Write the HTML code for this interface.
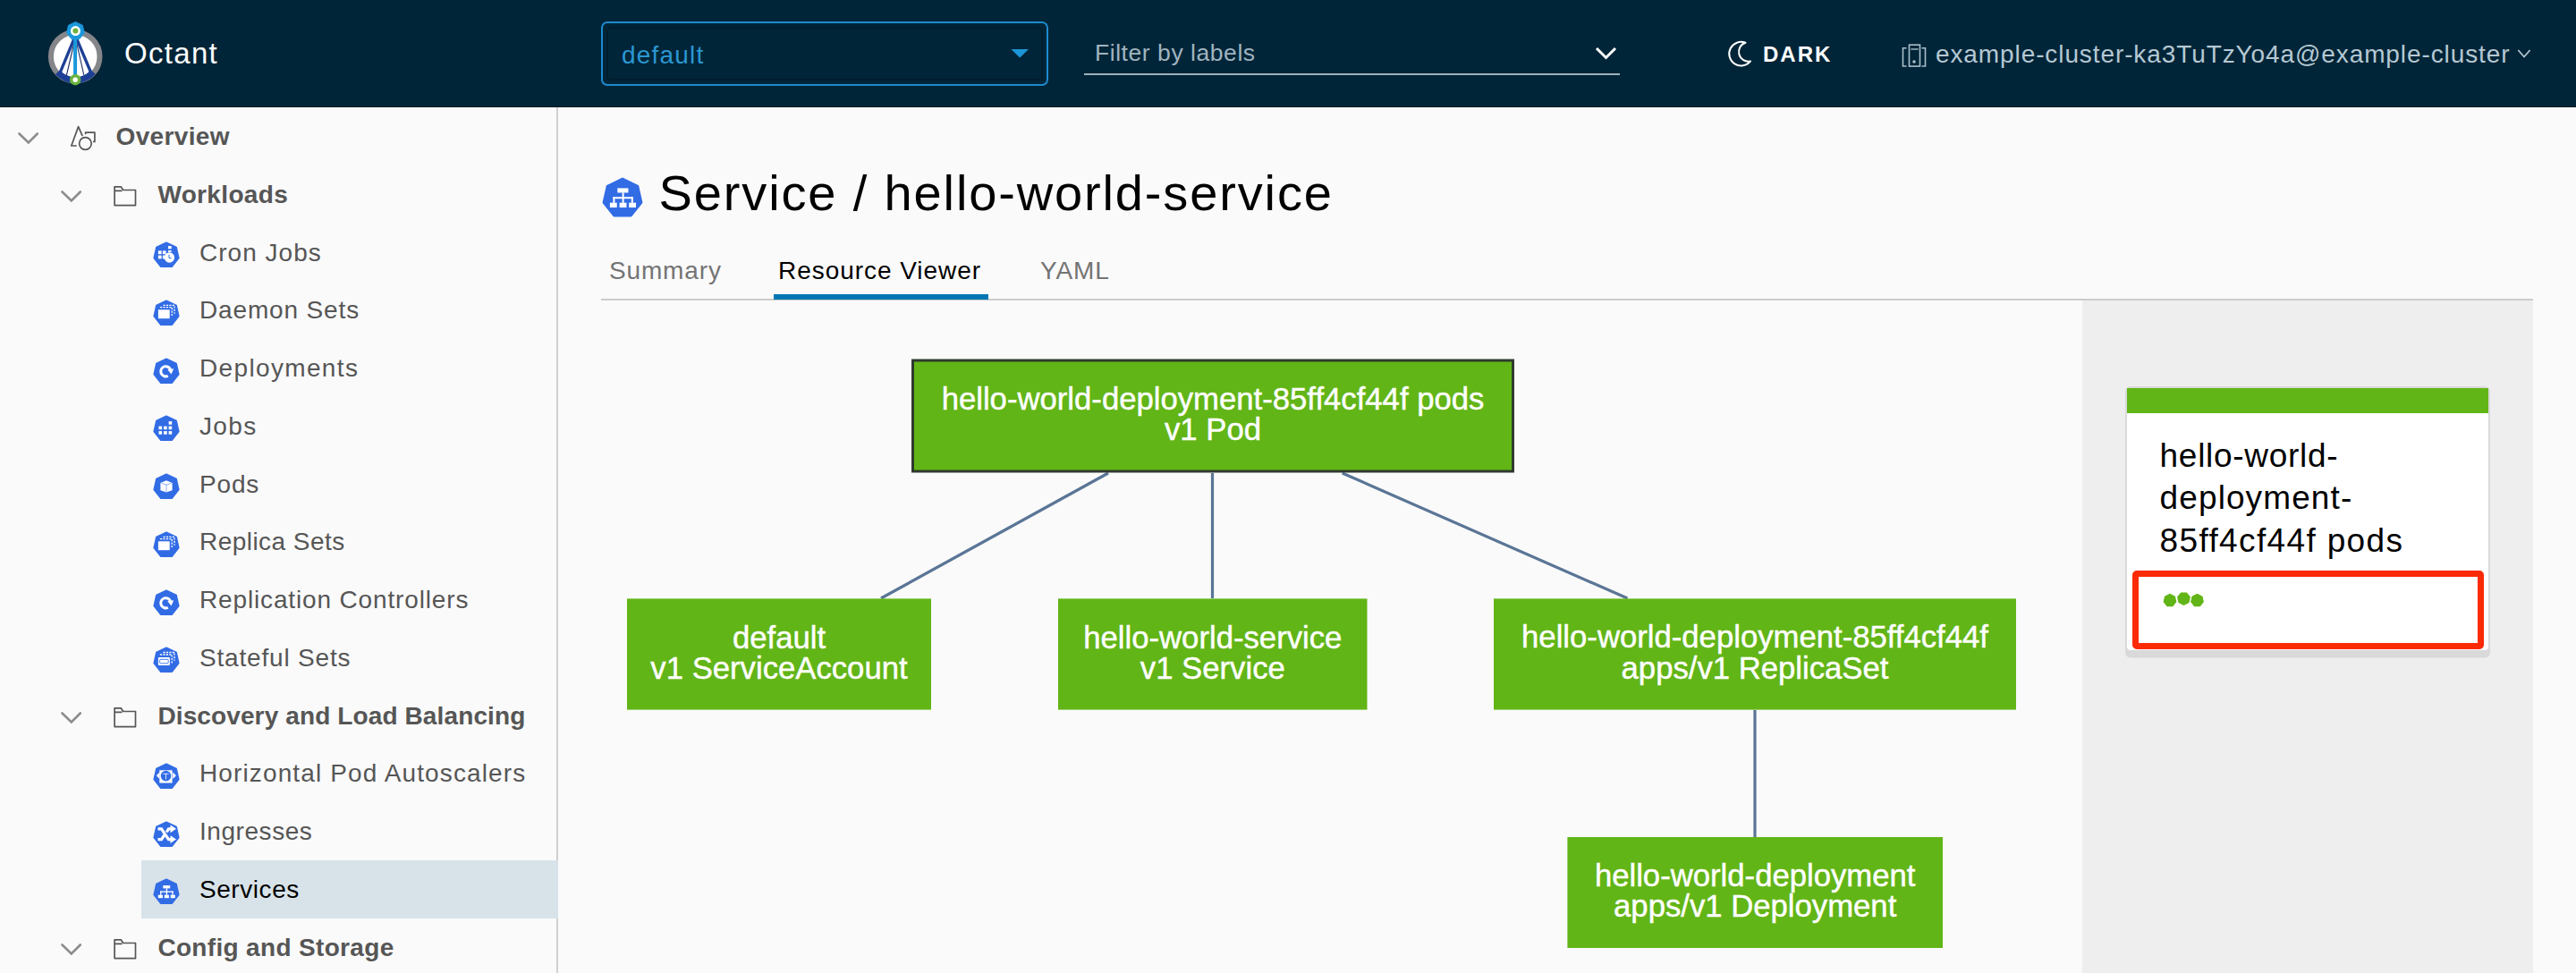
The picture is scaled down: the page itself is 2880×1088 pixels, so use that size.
<!DOCTYPE html><html><head><meta charset="utf-8"><title>Octant</title><style>
*{margin:0;padding:0;box-sizing:border-box}
html,body{width:2880px;height:1088px;overflow:hidden;background:#fafafa;font-family:"Liberation Sans",sans-serif}
.a{position:absolute;display:block}
.t{position:absolute;white-space:nowrap}
</style></head><body>
<div class="a" style="left:0;top:0;width:2880px;height:120px;background:#002538;border-bottom:1px solid #001a28"></div>
<svg class="a" style="left:40px;top:15px" width="90" height="90" viewBox="0 0 90 90">
<circle cx="44.2" cy="48.3" r="27.3" fill="#fff" stroke="#85868a" stroke-width="6"/>
<path d="M24.5 65.8 A26.3 26.3 0 0 0 64.1 65.5" stroke="#1d3f95" stroke-width="7" fill="none"/>
<path d="M44.3 25 L27.3 65.8 M44.3 25 L61.2 65" stroke="#1d3f95" stroke-width="3.3" fill="none"/>
<path d="M44.3 27 L34.3 69.5 M44.3 27 L53.8 68.8" stroke="#1f2f60" stroke-width="1.1" fill="none"/>
<path d="M44.1 25 V70" stroke="#1a98dc" stroke-width="4" fill="none"/>
<polygon points="44.40,9.40 52.37,13.24 54.34,21.87 48.83,28.79 39.97,28.79 34.46,21.87 36.43,13.24" fill="#1a98dc" stroke="#1a98dc" stroke-width="0.8" stroke-linejoin="round"/>
<circle cx="44.4" cy="19.6" r="5.5" fill="#fff"/><circle cx="44.4" cy="19.6" r="3" fill="#6cb33e"/>
<circle cx="44.2" cy="74.2" r="6.2" fill="#6cb33e"/><circle cx="44.2" cy="74.2" r="2.7" fill="#fff"/>
</svg>
<div class="t" style="left:139.00px;top:43.07px;font-size:33px;line-height:33px;color:#fff;font-weight:normal;letter-spacing:1.3px;">Octant</div>
<div class="a" style="left:672px;top:24px;width:500px;height:72px;border:2px solid #1d8ace;border-radius:7px"></div>
<div class="a" style="left:678px;top:30px;width:488px;height:60px;border:2px solid rgba(0,10,20,0.22);border-radius:5px"></div>
<div class="t" style="left:695.00px;top:47.50px;font-size:28px;line-height:28px;color:#2b97d2;font-weight:normal;letter-spacing:1.2px;">default</div>
<svg class="a" style="left:1128px;top:52px" width="24" height="16"><polygon points="2.5,3 22,3 12.2,12.5" fill="#1b96d9"/></svg>
<div class="t" style="left:1224.00px;top:45.77px;font-size:26.5px;line-height:26.5px;color:#a0b4c0;font-weight:normal;letter-spacing:0.55px;">Filter by labels</div>
<div class="a" style="left:1212px;top:82px;width:599px;height:2px;background:#9db1bd"></div>
<svg class="a" style="left:1780px;top:48px" width="32" height="22"><path d="M5 6 L15.5 16.5 L26 6" stroke="#fff" stroke-width="3" fill="none"/></svg>
<svg class="a" style="left:1920px;top:35px" width="44" height="50" viewBox="0 0 44 50"><path d="M31.5 12.8 A13.3 13.3 0 1 0 37 33.4 A10.67 10.67 0 0 1 31.5 12.8 Z" stroke="#fff" stroke-width="2" fill="none" stroke-linejoin="round"/></svg>
<div class="t" style="left:1971.00px;top:49.48px;font-size:24px;line-height:24px;color:#fff;font-weight:bold;letter-spacing:2.0px;">DARK</div>
<svg class="a" style="left:2122px;top:45px" width="36" height="34" viewBox="0 0 36 34">
<path d="M9.5 8.7 H5.5 V29 H9.5 M26.5 8.7 H30.5 V29 H26.5" stroke="#a9bfcb" stroke-width="1.6" fill="none"/>
<rect x="12.5" y="5.2" width="12" height="23.9" stroke="#a9bfcb" stroke-width="1.6" fill="none"/>
<path d="M14.3 10 H22.7" stroke="#a9bfcb" stroke-width="1.4"/><circle cx="18" cy="24" r="1.8" fill="#a9bfcb"/></svg>
<div class="t" style="left:2164.00px;top:46.70px;font-size:28px;line-height:28px;color:#b5c8d3;font-weight:normal;letter-spacing:0.9px;">example-cluster-ka3TuTzYo4a@example-cluster</div>
<svg class="a" style="left:2810px;top:50px" width="24" height="20"><path d="M5.3 6 L12 13.5 L18.6 6" stroke="#b5c8d3" stroke-width="1.7" fill="none"/></svg>
<div class="a" style="left:622px;top:120px;width:2px;height:968px;background:#cfcfcf"></div>
<div class="a" style="left:158px;top:962.0px;width:466px;height:65px;background:#d8e3e9"></div>
<svg class="a" style="left:17px;top:140.0px" width="30" height="28"><path d="M4.5 9.5 L14.8 19.5 L24.8 9.5" stroke="#8c8c8c" stroke-width="2.6" fill="none" stroke-linecap="round"/></svg>
<svg class="a" style="left:74px;top:136px" width="38" height="36" viewBox="0 0 38 36">
<path d="M11.1 27 H5.8 L13.6 5.6 L17.9 15.4" stroke="#565656" stroke-width="1.7" fill="none" stroke-linejoin="round" stroke-linecap="round"/>
<path d="M21.6 13.4 V12.2 H31.9 V22.4 H30.8" stroke="#565656" stroke-width="1.7" fill="none" stroke-linejoin="round" stroke-linecap="round"/>
<circle cx="21.4" cy="24.5" r="6.8" stroke="#565656" stroke-width="1.7" fill="none"/></svg>
<div class="t" style="left:129.50px;top:139.20px;font-size:28px;line-height:28px;color:#565656;font-weight:bold;letter-spacing:0.35px;">Overview</div>
<svg class="a" style="left:64.5px;top:204.8px" width="30" height="28"><path d="M4.5 9.5 L14.8 19.5 L24.8 9.5" stroke="#8c8c8c" stroke-width="2.6" fill="none" stroke-linecap="round"/></svg>
<svg class="a" style="left:124.3px;top:204.0px" width="30" height="30"><path d="M4.1 4.8 H11.2 L13.7 8.5 H27.5 V25.6 H4.1 Z M4.1 9.4 H12.5" stroke="#565656" stroke-width="1.7" fill="none" stroke-linejoin="round"/></svg>
<div class="t" style="left:176.40px;top:203.95px;font-size:28px;line-height:28px;color:#565656;font-weight:bold;letter-spacing:0.35px;">Workloads</div>
<svg class="a" style="left:171px;top:270.1px" width="30" height="30" viewBox="0 0 30 30"><polygon points="15.00,1.20 26.10,6.55 28.84,18.56 21.16,28.19 8.84,28.19 1.16,18.56 3.90,6.55" fill="#326ce5" stroke="#326ce5" stroke-width="1.6" stroke-linejoin="round"/><g fill="#fff"><rect x="5.9" y="10.4" width="3.7" height="3.8"/><rect x="10.9" y="10.4" width="3.7" height="3.8"/><rect x="5.9" y="15.6" width="3.7" height="3.8"/><rect x="10.9" y="15.6" width="3" height="3.8"/><rect x="17" y="5.1" width="3.7" height="3.2"/><rect x="17" y="10" width="3.7" height="1.8"/><circle cx="18.4" cy="18" r="5.7"/></g><path d="M18 14.8 V18.6 H20.6" stroke="#326ce5" stroke-width="1" fill="none"/></svg>
<div class="t" style="left:223.00px;top:268.70px;font-size:28px;line-height:28px;color:#565656;font-weight:normal;letter-spacing:1.02px;">Cron Jobs</div>
<svg class="a" style="left:171px;top:334.9px" width="30" height="30" viewBox="0 0 30 30"><polygon points="15.00,1.20 26.10,6.55 28.84,18.56 21.16,28.19 8.84,28.19 1.16,18.56 3.90,6.55" fill="#326ce5" stroke="#326ce5" stroke-width="1.6" stroke-linejoin="round"/><rect x="5.9" y="11.3" width="12.8" height="9.9" fill="#fff"/><path d="M8.5 9 V8.6 H21.2 V18.5" stroke="#fff" stroke-width="1.3" fill="none" stroke-dasharray="2.2 1.2"/><path d="M11.5 6.3 H24 V15.7" stroke="#fff" stroke-width="1.3" fill="none" stroke-dasharray="2.2 1.2"/></svg>
<div class="t" style="left:223.00px;top:333.45px;font-size:28px;line-height:28px;color:#565656;font-weight:normal;letter-spacing:0.85px;">Daemon Sets</div>
<svg class="a" style="left:171px;top:399.6px" width="30" height="30" viewBox="0 0 30 30"><polygon points="15.00,1.20 26.10,6.55 28.84,18.56 21.16,28.19 8.84,28.19 1.16,18.56 3.90,6.55" fill="#326ce5" stroke="#326ce5" stroke-width="1.6" stroke-linejoin="round"/><path d="M16.8 20.3 A5.6 5.6 0 1 1 19.8 14" stroke="#fff" stroke-width="3" fill="none"/><polygon points="16.3,13.2 23.2,12.3 20.5,18.5" fill="#fff"/></svg>
<div class="t" style="left:223.00px;top:398.20px;font-size:28px;line-height:28px;color:#565656;font-weight:normal;letter-spacing:1.35px;">Deployments</div>
<svg class="a" style="left:171px;top:464.4px" width="30" height="30" viewBox="0 0 30 30"><polygon points="15.00,1.20 26.10,6.55 28.84,18.56 21.16,28.19 8.84,28.19 1.16,18.56 3.90,6.55" fill="#326ce5" stroke="#326ce5" stroke-width="1.6" stroke-linejoin="round"/><rect x="17.6" y="7.1" width="3.6" height="3.6" fill="#fff"/><rect x="6.5" y="12.6" width="3.6" height="3.6" fill="#fff"/><rect x="12.1" y="12.6" width="3.6" height="3.6" fill="#fff"/><rect x="17.6" y="12.6" width="3.6" height="3.6" fill="#fff"/><rect x="6.5" y="18.1" width="3.6" height="3.6" fill="#fff"/><rect x="12.1" y="18.1" width="3.6" height="3.6" fill="#fff"/><rect x="17.6" y="18.1" width="3.6" height="3.6" fill="#fff"/></svg>
<div class="t" style="left:223.00px;top:462.95px;font-size:28px;line-height:28px;color:#565656;font-weight:normal;letter-spacing:1.35px;">Jobs</div>
<svg class="a" style="left:171px;top:529.1px" width="30" height="30" viewBox="0 0 30 30"><polygon points="15.00,1.20 26.10,6.55 28.84,18.56 21.16,28.19 8.84,28.19 1.16,18.56 3.90,6.55" fill="#326ce5" stroke="#326ce5" stroke-width="1.6" stroke-linejoin="round"/><polygon points="15,8.3 21.6,11 21.6,19.3 15,21.5 8.4,19.3 8.4,11" fill="#fff"/><path d="M9.5 11.3 L15 13.1 L20.5 11.3 M15 13.1 V21" stroke="#326ce5" stroke-width="0.9" fill="none" opacity="0.6"/></svg>
<div class="t" style="left:223.00px;top:527.70px;font-size:28px;line-height:28px;color:#565656;font-weight:normal;letter-spacing:0.85px;">Pods</div>
<svg class="a" style="left:171px;top:593.8px" width="30" height="30" viewBox="0 0 30 30"><polygon points="15.00,1.20 26.10,6.55 28.84,18.56 21.16,28.19 8.84,28.19 1.16,18.56 3.90,6.55" fill="#326ce5" stroke="#326ce5" stroke-width="1.6" stroke-linejoin="round"/><rect x="5.9" y="11.3" width="12.8" height="9.9" fill="#fff"/><path d="M8.5 9 V8.6 H21.2 V18.5" stroke="#fff" stroke-width="1.3" fill="none" stroke-dasharray="2.2 1.2"/><path d="M11.5 6.3 H24 V15.7" stroke="#fff" stroke-width="1.3" fill="none" stroke-dasharray="2.2 1.2"/></svg>
<div class="t" style="left:223.00px;top:592.45px;font-size:28px;line-height:28px;color:#565656;font-weight:normal;letter-spacing:0.45px;">Replica Sets</div>
<svg class="a" style="left:171px;top:658.6px" width="30" height="30" viewBox="0 0 30 30"><polygon points="15.00,1.20 26.10,6.55 28.84,18.56 21.16,28.19 8.84,28.19 1.16,18.56 3.90,6.55" fill="#326ce5" stroke="#326ce5" stroke-width="1.6" stroke-linejoin="round"/><path d="M16.8 20.3 A5.6 5.6 0 1 1 19.8 14" stroke="#fff" stroke-width="3" fill="none"/><polygon points="16.3,13.2 23.2,12.3 20.5,18.5" fill="#fff"/></svg>
<div class="t" style="left:223.00px;top:657.20px;font-size:28px;line-height:28px;color:#565656;font-weight:normal;letter-spacing:0.85px;">Replication Controllers</div>
<svg class="a" style="left:171px;top:723.3px" width="30" height="30" viewBox="0 0 30 30"><polygon points="15.00,1.20 26.10,6.55 28.84,18.56 21.16,28.19 8.84,28.19 1.16,18.56 3.90,6.55" fill="#326ce5" stroke="#326ce5" stroke-width="1.6" stroke-linejoin="round"/><rect x="5.9" y="12" width="13" height="9" fill="#fff" rx="1"/><rect x="7.6" y="14.3" width="9.6" height="4.5" rx="1.2" fill="none" stroke="#326ce5" stroke-width="0.9"/><path d="M8.5 9.5 V9 H21.2 V18.5" stroke="#fff" stroke-width="1.3" fill="none" stroke-dasharray="2.2 1.2"/><path d="M11.5 6.5 H24 V15.7" stroke="#fff" stroke-width="1.3" fill="none" stroke-dasharray="2.2 1.2"/></svg>
<div class="t" style="left:223.00px;top:721.95px;font-size:28px;line-height:28px;color:#565656;font-weight:normal;letter-spacing:0.82px;">Stateful Sets</div>
<svg class="a" style="left:171px;top:852.8px" width="30" height="30" viewBox="0 0 30 30"><polygon points="15.00,1.20 26.10,6.55 28.84,18.56 21.16,28.19 8.84,28.19 1.16,18.56 3.90,6.55" fill="#326ce5" stroke="#326ce5" stroke-width="1.6" stroke-linejoin="round"/><rect x="7.3" y="8.3" width="14.3" height="14.2" fill="#fff"/><polygon points="3.8,14.3 7.5,10.6 7.5,18" fill="#fff"/><polygon points="25.9,14.3 22.2,10.6 22.2,18" fill="#fff"/><circle cx="14.5" cy="14.6" r="5.8" fill="#326ce5"/><path d="M11.3 12.3 H17.7 M14.5 12.3 V18.5" stroke="#fff" stroke-width="1" fill="none" opacity="0.8"/></svg>
<div class="t" style="left:223.00px;top:851.45px;font-size:28px;line-height:28px;color:#565656;font-weight:normal;letter-spacing:1.12px;">Horizontal Pod Autoscalers</div>
<svg class="a" style="left:171px;top:917.6px" width="30" height="30" viewBox="0 0 30 30"><polygon points="15.00,1.20 26.10,6.55 28.84,18.56 21.16,28.19 8.84,28.19 1.16,18.56 3.90,6.55" fill="#326ce5" stroke="#326ce5" stroke-width="1.6" stroke-linejoin="round"/><path d="M5.5 8.8 H9.5 L17.5 20.6 H21" stroke="#fff" stroke-width="3.2" fill="none"/><path d="M5.5 20.6 H9.5 L13 15.5 M15.2 12.5 L17.5 8.8 H21" stroke="#fff" stroke-width="3.2" fill="none"/><polygon points="19.5,4.4 26,8.8 19.5,13.2" fill="#fff"/><polygon points="19.5,16.2 26,20.6 19.5,25" fill="#fff"/></svg>
<div class="t" style="left:223.00px;top:916.20px;font-size:28px;line-height:28px;color:#565656;font-weight:normal;letter-spacing:0.56px;">Ingresses</div>
<svg class="a" style="left:171px;top:982.3px" width="30" height="30" viewBox="0 0 30 30"><polygon points="15.00,1.20 26.10,6.55 28.84,18.56 21.16,28.19 8.84,28.19 1.16,18.56 3.90,6.55" fill="#326ce5" stroke="#326ce5" stroke-width="1.6" stroke-linejoin="round"/><g fill="#fff"><rect x="11.3" y="8.1" width="7.9" height="3.3"/><rect x="14.75" y="11.3" width="1.3" height="7.5"/><rect x="8.1" y="14.5" width="14.6" height="1.3"/><rect x="8.1" y="14.5" width="1.3" height="4.3"/><rect x="21.4" y="14.5" width="1.3" height="4.3"/><rect x="5.8" y="18.7" width="5.1" height="3.5"/><rect x="12.8" y="18.7" width="5.1" height="3.5"/><rect x="19.7" y="18.7" width="5.1" height="3.5"/></g></svg>
<div class="t" style="left:223.00px;top:980.95px;font-size:28px;line-height:28px;color:#000;font-weight:normal;letter-spacing:0.56px;">Services</div>
<svg class="a" style="left:64.5px;top:787.5px" width="30" height="28"><path d="M4.5 9.5 L14.8 19.5 L24.8 9.5" stroke="#8c8c8c" stroke-width="2.6" fill="none" stroke-linecap="round"/></svg>
<svg class="a" style="left:124.3px;top:786.7px" width="30" height="30"><path d="M4.1 4.8 H11.2 L13.7 8.5 H27.5 V25.6 H4.1 Z M4.1 9.4 H12.5" stroke="#565656" stroke-width="1.7" fill="none" stroke-linejoin="round"/></svg>
<div class="t" style="left:176.40px;top:786.70px;font-size:28px;line-height:28px;color:#565656;font-weight:bold;letter-spacing:0.12px;">Discovery and Load Balancing</div>
<svg class="a" style="left:64.5px;top:1046.5px" width="30" height="28"><path d="M4.5 9.5 L14.8 19.5 L24.8 9.5" stroke="#8c8c8c" stroke-width="2.6" fill="none" stroke-linecap="round"/></svg>
<svg class="a" style="left:124.3px;top:1045.7px" width="30" height="30"><path d="M4.1 4.8 H11.2 L13.7 8.5 H27.5 V25.6 H4.1 Z M4.1 9.4 H12.5" stroke="#565656" stroke-width="1.7" fill="none" stroke-linejoin="round"/></svg>
<div class="t" style="left:176.40px;top:1045.70px;font-size:28px;line-height:28px;color:#565656;font-weight:bold;letter-spacing:0.33px;">Config and Storage</div>
<svg class="a" style="left:672.5px;top:198px" width="46" height="46" viewBox="0 0 30 30"><polygon points="15.00,1.20 26.10,6.55 28.84,18.56 21.16,28.19 8.84,28.19 1.16,18.56 3.90,6.55" fill="#326ce5" stroke="#326ce5" stroke-width="1.6" stroke-linejoin="round"/><g fill="#fff"><rect x="11.3" y="8.1" width="7.9" height="3.3"/><rect x="14.75" y="11.3" width="1.3" height="7.5"/><rect x="8.1" y="14.5" width="14.6" height="1.3"/><rect x="8.1" y="14.5" width="1.3" height="4.3"/><rect x="21.4" y="14.5" width="1.3" height="4.3"/><rect x="5.8" y="18.7" width="5.1" height="3.5"/><rect x="12.8" y="18.7" width="5.1" height="3.5"/><rect x="19.7" y="18.7" width="5.1" height="3.5"/></g></svg>
<div class="t" style="left:736.60px;top:187.60px;font-size:56px;line-height:56px;color:#000;font-weight:normal;letter-spacing:1.86px;">Service / hello-world-service</div>
<div class="t" style="left:681.00px;top:288.70px;font-size:28px;line-height:28px;color:#747474;font-weight:normal;letter-spacing:0.85px;">Summary</div>
<div class="t" style="left:870.00px;top:288.70px;font-size:28px;line-height:28px;color:#000;font-weight:normal;letter-spacing:0.95px;">Resource Viewer</div>
<div class="t" style="left:1163.00px;top:288.70px;font-size:28px;line-height:28px;color:#747474;font-weight:normal;letter-spacing:0.9px;">YAML</div>
<div class="a" style="left:672px;top:334px;width:2160px;height:2px;background:#cccccc"></div>
<div class="a" style="left:865px;top:329px;width:240px;height:6px;background:#0077b3"></div>
<div class="a" style="left:2328px;top:336px;width:504px;height:752px;background:#eeeeee"></div>
<svg class="a" style="left:0;top:0" width="2880" height="1088"><g stroke="#5a7596" stroke-width="3.2" fill="none"><path d="M1239 529 L985 669"/><path d="M1355.5 529 V669"/><path d="M1500.7 529 L1819.5 669"/><path d="M1962 794 V936"/></g><rect x="1020.5" y="403" width="671" height="124" fill="#62b516" stroke="#2f3a2e" stroke-width="3"/><rect x="701" y="669.4" width="340" height="124.20000000000005" fill="#62b516"/><rect x="1183" y="669.4" width="345.5" height="124.20000000000005" fill="#62b516"/><rect x="1670" y="669.4" width="584" height="124.20000000000005" fill="#62b516"/><rect x="1752.4" y="936" width="419.5999999999999" height="124" fill="#62b516"/><g fill="#fff" stroke="#fff" stroke-width="0.45" font-family="Liberation Sans, sans-serif" font-size="34.7"><text x="1356" y="457.8" text-anchor="middle">hello-world-deployment-85ff4cf44f pods</text><text x="1356" y="492.1" text-anchor="middle">v1 Pod</text><text x="871" y="724.8" text-anchor="middle">default</text><text x="871" y="759.1" text-anchor="middle">v1 ServiceAccount</text><text x="1355.8" y="724.7" text-anchor="middle">hello-world-service</text><text x="1355.8" y="759.0" text-anchor="middle">v1 Service</text><text x="1962" y="724.2" text-anchor="middle">hello-world-deployment-85ff4cf44f</text><text x="1962" y="758.5" text-anchor="middle">apps/v1 ReplicaSet</text><text x="1962.2" y="990.5" text-anchor="middle">hello-world-deployment</text><text x="1962.2" y="1024.8" text-anchor="middle">apps/v1 Deployment</text></g></svg>
<div class="a" style="left:2376px;top:432px;width:408px;height:297px;border-radius:6px;background:#fff;border:2px solid #d9d9d9;box-shadow:0 6.5px 0 #d9d9d9"><div style="position:absolute;left:0;top:0;width:404px;height:28px;background:#62b516"></div></div>
<div class="t" style="left:2414.60px;top:490.58px;font-size:37px;line-height:37px;color:#000;font-weight:normal;letter-spacing:0.7px;">hello-world-</div>
<div class="t" style="left:2414.60px;top:538.28px;font-size:37px;line-height:37px;color:#000;font-weight:normal;letter-spacing:1.1px;">deployment-</div>
<div class="t" style="left:2414.60px;top:586.48px;font-size:37px;line-height:37px;color:#000;font-weight:normal;letter-spacing:1.36px;">85ff4cf44f pods</div>
<div class="a" style="left:2383.5px;top:638px;width:393px;height:87.5px;border:7px solid #fb2b06;border-radius:5px"></div>
<svg class="a" style="left:2410px;top:652px" width="64" height="36"><polygon points="16.00,11.80 21.94,14.66 23.41,21.09 19.30,26.25 12.70,26.25 8.59,21.09 10.06,14.66" fill="#62b516"/><polygon points="34.80,10.45 38.91,15.61 37.44,22.04 31.50,24.90 25.56,22.04 24.09,15.61 28.20,10.45" fill="#62b516"/><polygon points="46.50,11.80 52.44,14.66 53.91,21.09 49.80,26.25 43.20,26.25 39.09,21.09 40.56,14.66" fill="#62b516"/></svg>
</body></html>
